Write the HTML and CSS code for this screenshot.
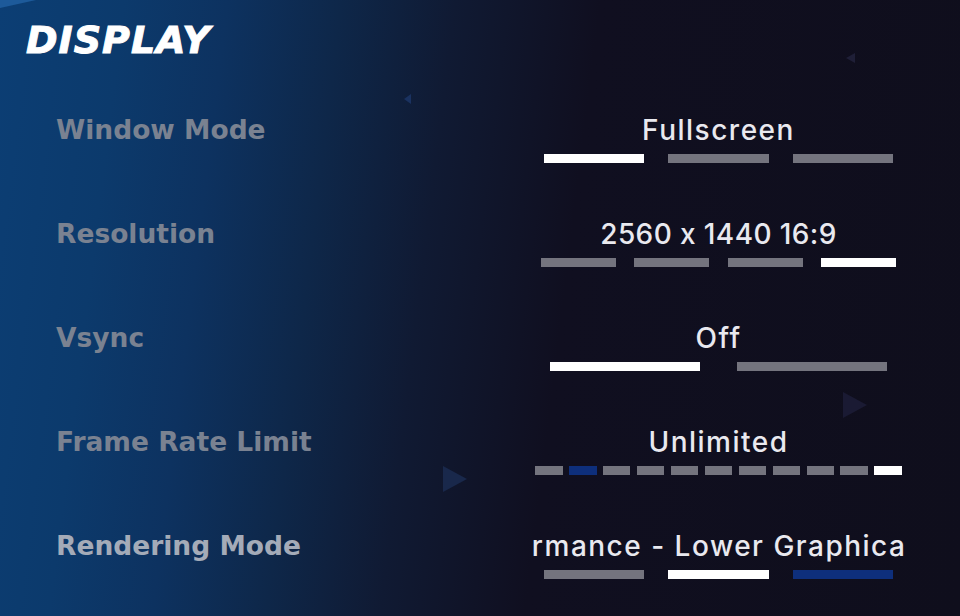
FILE: index.html
```html
<!DOCTYPE html>
<html lang="en">
<head>
<meta charset="utf-8">
<title>Display Settings</title>
<link rel="stylesheet" href="styles.css">
</head>
<body>
<div class="screen">
  <div class="deco deco-corner"></div>
  <div class="deco tri-left tri-a"></div>
  <div class="deco tri-left tri-b"></div>
  <div class="deco tri-right tri-c"></div>
  <div class="deco tri-right tri-d"></div>

  <header class="header">
    <h1 class="title">DISPLAY</h1>
  </header>

  <section class="settings">
    <div class="row">
      <div class="label">Window Mode</div>
      <div class="control">
        <div class="value">Fullscreen</div>
        <div class="bars">
          <span class="slot"><span class="bar on"></span></span>
          <span class="slot"><span class="bar"></span></span>
          <span class="slot"><span class="bar"></span></span>
        </div>
      </div>
    </div>

    <div class="row">
      <div class="label">Resolution</div>
      <div class="control">
        <div class="value numeric">2560 x 1440 16:9</div>
        <div class="bars">
          <span class="slot"><span class="bar"></span></span>
          <span class="slot"><span class="bar"></span></span>
          <span class="slot"><span class="bar"></span></span>
          <span class="slot"><span class="bar on"></span></span>
        </div>
      </div>
    </div>

    <div class="row">
      <div class="label">Vsync</div>
      <div class="control">
        <div class="value">Off</div>
        <div class="bars">
          <span class="slot"><span class="bar on"></span></span>
          <span class="slot"><span class="bar"></span></span>
        </div>
      </div>
    </div>

    <div class="row">
      <div class="label">Frame Rate Limit</div>
      <div class="control">
        <div class="value">Unlimited</div>
        <div class="bars">
          <span class="slot"><span class="bar"></span></span>
          <span class="slot"><span class="bar blue"></span></span>
          <span class="slot"><span class="bar"></span></span>
          <span class="slot"><span class="bar"></span></span>
          <span class="slot"><span class="bar"></span></span>
          <span class="slot"><span class="bar"></span></span>
          <span class="slot"><span class="bar"></span></span>
          <span class="slot"><span class="bar"></span></span>
          <span class="slot"><span class="bar"></span></span>
          <span class="slot"><span class="bar"></span></span>
          <span class="slot"><span class="bar on"></span></span>
        </div>
      </div>
    </div>

    <div class="row active">
      <div class="label">Rendering Mode</div>
      <div class="control">
        <div class="value marquee"><span class="marquee-text">Performance - Lower Graphical Fidelity</span></div>
        <div class="bars">
          <span class="slot"><span class="bar"></span></span>
          <span class="slot"><span class="bar on"></span></span>
          <span class="slot"><span class="bar blue"></span></span>
        </div>
      </div>
    </div>
  </section>
</div>
</body>
</html>
```

FILE: styles.css
```css
* { box-sizing: border-box; }

html, body {
  margin: 0;
  padding: 0;
  width: 960px;
  height: 616px;
  overflow: hidden;
}

body {
  background: #0f0e1c;
  font-family: "DejaVu Sans", sans-serif;
}

.screen {
  position: relative;
  width: 960px;
  height: 616px;
  overflow: hidden;
  background:
    linear-gradient(97deg,
      #0c3e74 0%,
      #0c3a6c 12%,
      #0d3260 22%,
      #0e2749 33%,
      #101a33 44%,
      #100f20 58%,
      #0f0e1c 100%);
}

/* decorative faint triangles */
.deco { position: absolute; width: 0; height: 0; }
.deco-corner {
  left: 0; top: 0;
  border-top: 8px solid #1d5a9a;
  border-right: 36px solid transparent;
}
.tri-left { border-top: 5px solid transparent; border-bottom: 5px solid transparent; }
.tri-a { left: 404px; top: 94px; border-right: 7px solid #1a3260; }
.tri-b { left: 846px; top: 53px; border-right: 9px solid #1f1f37; }
.tri-right { border-top: 13px solid transparent; border-bottom: 13px solid transparent; }
.tri-c { left: 843px; top: 392px; border-left: 24px solid #1a1a33; }
.tri-d { left: 443px; top: 466px; border-left: 24px solid #19284b; }

.header {
  height: 114px;
  padding: 18px 0 0 26px;
}

.title {
  margin: 0;
  font-family: "DejaVu Sans", sans-serif;
  font-weight: 700;
  font-style: italic;
  font-size: 38px;
  line-height: 44px;
  color: #ffffff;
  letter-spacing: 1px;
  -webkit-text-stroke: 1px #ffffff;
}

.settings {
  display: flex;
  flex-direction: column;
  padding: 0 55px 0 56px;
}

.row {
  display: grid;
  grid-template-columns: 1fr 373px;
  height: 104px;
  align-items: start;
}

.label {
  font-family: "DejaVu Sans", sans-serif;
  font-weight: 700;
  font-size: 26.5px;
  line-height: 32px;
  color: #7a8291;
  white-space: nowrap;
}

.row.active .label { color: #a4abb8; }

.control {
  display: flex;
  flex-direction: column;
  align-items: stretch;
}

.value {
  font-family: "Inter", sans-serif;
  font-weight: 500;
  font-size: 28px;
  line-height: 32px;
  color: #e9e9ef;
  text-align: center;
  letter-spacing: 1.5px;
  white-space: nowrap;
}

.value.numeric { letter-spacing: 0.4px; }

.marquee {
  overflow: hidden;
  text-align: left;
}
.marquee-text {
  display: inline-block;
  margin-left: -80px;
}

.bars {
  display: flex;
  margin-top: 8px;
  height: 9px;
}

.slot {
  flex: 1 1 0;
  display: flex;
  justify-content: center;
}

.bar {
  display: block;
  width: 80.6%;
  height: 9px;
  background: #74747e;
}

.bar.on { background: #ffffff; }
.bar.blue { background: #0e2f7c; }
```
